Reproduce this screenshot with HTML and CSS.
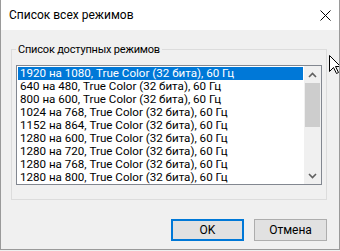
FILE: index.html
```html
<!DOCTYPE html>
<html lang="ru">
<head>
  <meta charset="UTF-8" />
  <meta name="viewport" content="width=device-width, initial-scale=1.0"/>
  <title>Список всех режимов</title>
  <link rel="stylesheet" href="styles.css">
</head>
<body>

  <div class="window">
    <div class="titlebar">
      <span class="title">Список всех режимов</span>
      <button class="close" aria-label="Закрыть">
        <svg width="11" height="11" viewBox="0 0 11 11">
          <path d="M0.5 0.5L10.5 10.5M10.5 0.5L0.5 10.5" stroke="#000" stroke-width="1"/>
        </svg>
      </button>
    </div>

    <div class="content">
      <fieldset class="group">
        <legend>Список доступных режимов</legend>
        <div class="listbox">
          <ul class="items">
            <li class="selected">1920 на 1080, True Color (32 бита), 60 Гц</li>
            <li>640 на 480, True Color (32 бита), 60 Гц</li>
            <li>800 на 600, True Color (32 бита), 60 Гц</li>
            <li>1024 на 768, True Color (32 бита), 60 Гц</li>
            <li>1152 на 864, True Color (32 бита), 60 Гц</li>
            <li>1280 на 600, True Color (32 бита), 60 Гц</li>
            <li>1280 на 720, True Color (32 бита), 60 Гц</li>
            <li>1280 на 768, True Color (32 бита), 60 Гц</li>
            <li>1280 на 800, True Color (32 бита), 60 Гц</li>
          </ul>
          <div class="scrollbar">
            <div class="arrow">
              <svg width="9" height="6" viewBox="0 0 9 6">
                <path d="M1 5L4.5 1.5L8 5" fill="none" stroke="#606060" stroke-width="1.6"/>
              </svg>
            </div>
            <div class="track"><div class="thumb"></div></div>
            <div class="arrow">
              <svg width="9" height="6" viewBox="0 0 9 6">
                <path d="M1 1L4.5 4.5L8 1" fill="none" stroke="#606060" stroke-width="1.6"/>
              </svg>
            </div>
          </div>
        </div>
      </fieldset>

      <div class="actions">
        <button class="btn default">OK</button>
        <button class="btn">Отмена</button>
      </div>
    </div>

    <!-- mouse pointer over the dialog edge -->
    <svg class="cursor" width="13" height="20" viewBox="0 0 13 20">
      <path d="M0.5 0.5L0.5 16.5L4.5 12.5L7.5 18.5L9.5 17.5L6.5 11.5L11.5 11.5Z" fill="#fff" stroke="#000" stroke-width="1"/>
    </svg>
  </div>

</body>
</html>
```

FILE: styles.css
```css
:root {
  --face: #f0f0f0;
  --accent: #0078d7;
  --frame: #9a9a9a;
}

body {
  margin: 0;
  padding: 0;
  background: var(--face);
  font-family: Roboto, 'Noto Sans', sans-serif;
  font-size: 12px;
  color: #000;
}

.window {
  position: relative;
  width: 340px;
  height: 250px;
  box-sizing: border-box;
  border: 1px solid var(--frame);
  border-top: none;
  display: flex;
  flex-direction: column;
  overflow: hidden;
}

.titlebar {
  height: 30px;
  flex-shrink: 0;
  background: #fff;
  display: flex;
  align-items: center;
  justify-content: space-between;
  padding: 0 8px;
}

.title {
  font-size: 12px;
}

.close {
  border: none;
  background: transparent;
  padding: 0;
  width: 11px;
  height: 11px;
  display: flex;
}

.content {
  flex: 1;
  background: var(--face);
  display: flex;
  flex-direction: column;
}

.group {
  margin: 13px 12px 0 10px;
  padding: 9px 4px 14px 4px;
  border: 1px solid #dcdcdc;
  min-width: 0;
}

.group legend {
  padding: 0 2px;
  line-height: 13px;
  font-size: 11px;
  letter-spacing: -0.2px;
}

.listbox {
  display: flex;
  height: 118px;
  border: 1px solid #828790;
  background: #fff;
}

.items {
  flex: 1;
  list-style: none;
  margin: 0;
  padding: 1px;
  overflow: hidden;
  font-size: 11.6px;
}

.items li {
  height: 13px;
  line-height: 13px;
  padding-left: 2px;
  white-space: nowrap;
}

.items li.selected {
  background: var(--accent);
  color: #fff;
}

.scrollbar {
  width: 17px;
  display: flex;
  flex-direction: column;
  background: var(--face);
}

.arrow {
  height: 17px;
  display: flex;
  align-items: center;
  justify-content: center;
}

.track {
  flex: 1;
}

.thumb {
  height: 44px;
  margin: 0 1px;
  background: #cdcdcd;
}

.actions {
  display: flex;
  justify-content: flex-end;
  gap: 10px;
  margin: 19px 12px 0 0;
}

.btn {
  width: 73px;
  height: 22px;
  box-sizing: border-box;
  font-family: inherit;
  font-size: 12px;
  background: #e1e1e1;
  border: 1px solid #adadad;
  padding: 0;
  color: #000;
}

.btn.default {
  border: 2px solid var(--accent);
}

.cursor {
  position: absolute;
  left: 328px;
  top: 55px;
}
```
